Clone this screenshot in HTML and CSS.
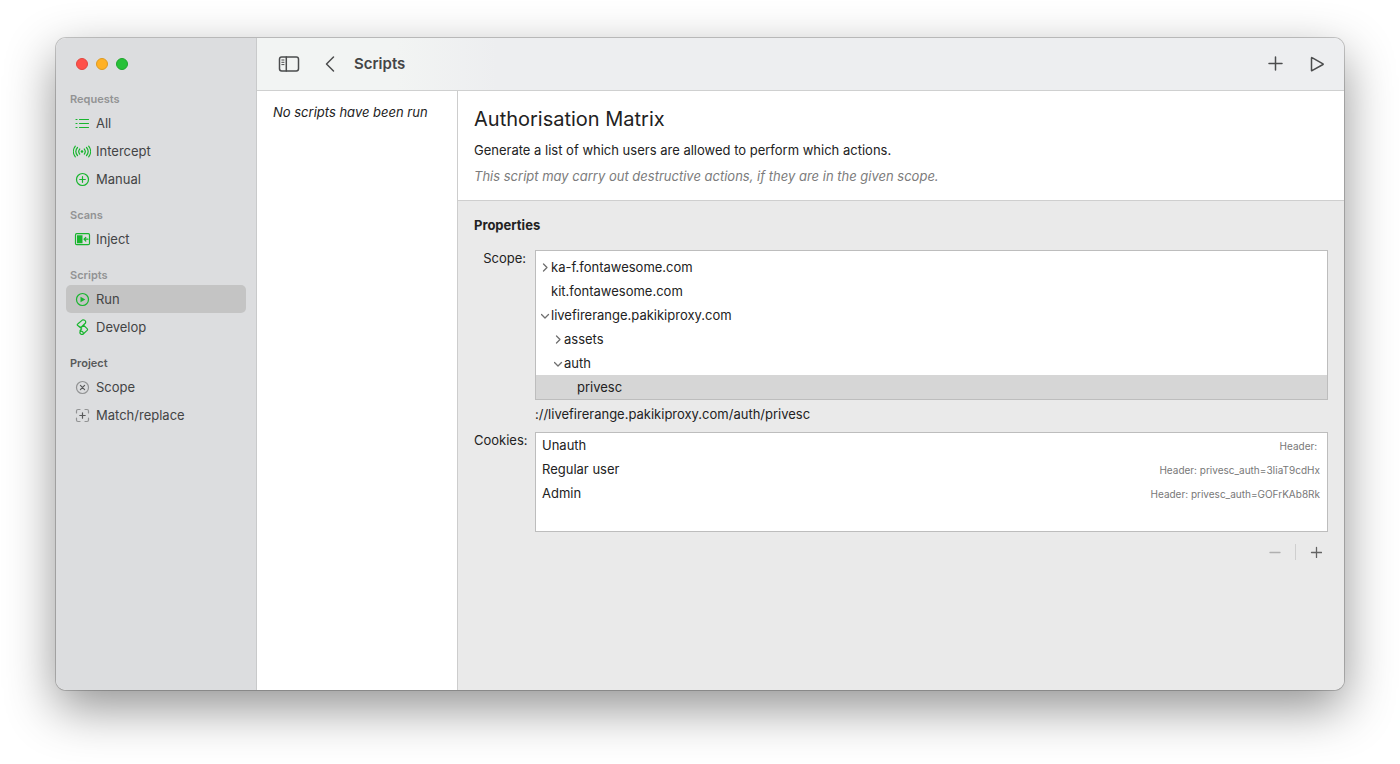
FILE: index.html
```html
<!DOCTYPE html>
<html lang="en">
<head>
<meta charset="utf-8">
<title>Scripts</title>
<meta name="viewport" content="width=device-width, initial-scale=1">
<link rel="stylesheet" href="styles.css">
</head>
<body>
<div class="window">
  <aside class="sidebar">
    <div class="lights">
      <button class="light light-close" aria-label="Close"></button>
      <button class="light light-minimise" aria-label="Minimise"></button>
      <button class="light light-zoom" aria-label="Zoom"></button>
    </div>
    <nav class="nav">
      <section class="group">
        <h2 class="group-title">Requests</h2>
        <a class="item" href="#all">
          <svg class="icon" viewBox="0 0 18 16"><path d="M6.500 4.500h9M6.500 8.500h9M6.500 12.500h9M3 4.500h1M3 8.500h1M3 12.500h1"/></svg>All</a>
        <a class="item" href="#intercept">
          <svg class="icon" viewBox="0 0 18 16"><circle class="solid" cx="9" cy="8.500" r="1.300"/><path d="M6.700 6a4 4 0 0 0 0 5M11.300 6a4 4 0 0 1 0 5M4.500 4.500a6.200 6.200 0 0 0 0 8M13.500 4.500a6.200 6.200 0 0 1 0 8M2.300 3.200a8.500 8.500 0 0 0 0 10.600M15.700 3.200a8.500 8.500 0 0 1 0 10.600"/></svg>Intercept</a>
        <a class="item" href="#manual">
          <svg class="icon" viewBox="0 0 18 16"><circle cx="9.500" cy="8.500" r="6"/><path d="M9.500 5.700v5.600M6.700 8.500h5.600"/></svg>Manual</a>
      </section>
      <section class="group">
        <h2 class="group-title">Scans</h2>
        <a class="item" href="#inject">
          <svg class="icon" viewBox="0 0 18 16"><rect x="2.500" y="2.700" width="14" height="11" rx="1.200"/><path class="solid" d="M4 4.200h5.500v8H4z"/><path d="M15 8.200h-4M12.800 6.400L11 8.200l1.800 1.800"/></svg>Inject</a>
      </section>
      <section class="group">
        <h2 class="group-title">Scripts</h2>
        <a class="item item-current" href="#run" aria-current="page">
          <svg class="icon" viewBox="0 0 18 16"><circle cx="9.500" cy="8.500" r="6"/><path class="solid" d="M7.500 5.700v5.600l4.800-2.800z"/></svg>Run</a>
        <a class="item" href="#develop">
          <svg class="icon" viewBox="0 0 18 16"><path d="M5 4.700L9.300 1.100c1.600-1 4.100.8 3.200 2.900L7.900 8.500 4.800 6.600Q3.600 5.700 5 4.700zM4.800 6.600l3.900 3.300-1.600 1.600M12.500 4l-2 2.200 3.600 3.400q.9.900 0 1.800L10 15.200c-1.500.9-3.600-.6-2.900-2.300M10.700 6.400L7.900 8.900M6.900 12.900q1.200-1.500 2.700-.2 1 1.200.4 2.500"/></svg>Develop</a>
      </section>
      <section class="group group-project">
        <h2 class="group-title">Project</h2>
        <a class="item" href="#scope">
          <svg class="icon" viewBox="0 0 18 16"><circle class="faint" cx="9.500" cy="8.500" r="6"/><path d="M7.400 6.400l4.200 4.200M11.600 6.400l-4.200 4.200"/></svg>Scope</a>
        <a class="item" href="#match">
          <svg class="icon" viewBox="0 0 18 16"><path class="faint" d="M3.500 6V4q0-1.500 1.500-1.500h2M12 2.500h2q1.500 0 1.500 1.500v2M15.500 11v2q0 1.500-1.500 1.500h-2M7 14.500H5q-1.500 0-1.500-1.500v-2"/><path d="M9.500 5.800v5.400M6.800 8.500h5.400"/></svg>Match/replace</a>
      </section>
    </nav>
  </aside>

  <div class="main">
    <header class="toolbar">
      <button class="tool" aria-label="Toggle sidebar">
        <svg width="22" height="18" viewBox="0 0 22 18"><rect x="1.500" y="2" width="19" height="14" rx="2.200"/><path d="M8.300 2v14"/><path class="thin" d="M3.800 5h2.200M3.800 7.300h2.200M3.800 9.600h2.200"/></svg>
      </button>
      <button class="tool tool-back" aria-label="Back">
        <svg width="12" height="18" viewBox="0 0 12 18"><path d="M9.500 2L2.500 9l7 7"/></svg>
      </button>
      <h1 class="title">Scripts</h1>
      <div class="actions">
        <button class="tool" aria-label="Add script">
          <svg width="16" height="18" viewBox="0 0 16 18"><path d="M7.500 2v13M1 8.500h13"/></svg>
        </button>
        <button class="tool" aria-label="Run script">
          <svg width="16" height="18" viewBox="0 0 16 18"><path d="M2.500 3v12.400q0 .6.500.3L14 9.500q.4-.3 0-.6L3 2.700q-.5-.3-.5.3z"/></svg>
        </button>
      </div>
    </header>

    <div class="panes">
      <section class="history"><p class="empty">No scripts have been run</p></section>
      <main class="detail">
        <header class="summary">
          <h2 class="heading">Authorisation Matrix</h2>
          <p class="lead">Generate a list of which users are allowed to perform which actions.</p>
          <p class="warning">This script may carry out destructive actions, if they are in the given scope.</p>
        </header>
        <section class="properties">
          <h3 class="subheading">Properties</h3>
          <div class="form">
            <div class="label" id="scope-label">Scope:</div>
            <div class="field">
              <ul class="box tree" role="tree" aria-labelledby="scope-label">
                <li class="node" role="treeitem" aria-expanded="false"><svg class="arrow" viewBox="0 0 10 10"><path d="M2.500 2L6 5.500 2.500 9"/></svg>ka-f.fontawesome.com</li>
                <li class="node" role="treeitem"><span class="arrow"></span>kit.fontawesome.com</li>
                <li class="node" role="treeitem" aria-expanded="true"><svg class="arrow" viewBox="0 0 10 10"><path d="M.5 4.500L4 8l3.500-3.500"/></svg>livefirerange.pakikiproxy.com</li>
                <li class="node level-2" role="treeitem" aria-expanded="false"><svg class="arrow" viewBox="0 0 10 10"><path d="M2.500 2L6 5.500 2.500 9"/></svg>assets</li>
                <li class="node level-2" role="treeitem" aria-expanded="true"><svg class="arrow" viewBox="0 0 10 10"><path d="M.5 4.500L4 8l3.500-3.500"/></svg>auth</li>
                <li class="node level-3 node-selected" role="treeitem" aria-selected="true"><span class="arrow"></span>privesc</li>
              </ul>
              <p class="url">://livefirerange.pakikiproxy.com/auth/privesc</p>
            </div>
            <div class="label" id="cookies-label">Cookies:</div>
            <div class="field">
              <div class="box cookies">
                <table class="table" aria-labelledby="cookies-label">
                  <tbody>
                    <tr><td>Unauth</td><td class="value">Header:&nbsp;</td></tr>
                    <tr><td>Regular user</td><td class="value">Header: privesc_auth=3IiaT9cdHx</td></tr>
                    <tr><td>Admin</td><td class="value">Header: privesc_auth=GOFrKAb8Rk</td></tr>
                  </tbody>
                </table>
              </div>
              <div class="edit">
                <button class="small" aria-label="Remove cookie" disabled><svg width="12" height="12" viewBox="0 0 12 12"><path d="M1 6.500h10"/></svg></button>
                <span class="divider"></span>
                <button class="small" aria-label="Add cookie"><svg width="12" height="12" viewBox="0 0 12 12"><path d="M1.500 6.500h10M6.500 1.500v10"/></svg></button>
              </div>
            </div>
          </div>
        </section>
      </main>
    </div>
  </div>
</div>
</body>
</html>
```

FILE: styles.css
```css
* { box-sizing: border-box; }

body {
  margin: 0;
  min-height: 100vh;
  display: flex;
  padding: 38px 56px 74px;
  background: #fff;
  color: #222;
  font: 13px/16px Inter, "Liberation Sans", sans-serif;
}

h1, h2, h3, p, ul { margin: 0; padding: 0; }

button {
  padding: 0;
  border: 0;
  background: none;
  font: inherit;
}

svg {
  display: block;
  fill: none;
  stroke: currentColor;
  stroke-linecap: round;
  stroke-linejoin: round;
}

.window {
  flex: 1;
  display: flex;
  min-width: 0;
  border-radius: 10px;
  overflow: hidden;
  background: #fff;
  box-shadow: 0 0 0 1px rgba(0, 0, 0, .2), 0 18px 50px rgba(0, 0, 0, .43);
}

/* Sidebar */
.sidebar {
  flex: 0 0 201px;
  padding: 20px 10px;
  background: #dcdddf;
  border-right: 1px solid #c9cacb;
}

.lights { display: flex; gap: 8px; padding-left: 10px; }

.light {
  width: 12px;
  height: 12px;
  border-radius: 50%;
  border: 1px solid;
}

.light-close { background: #ff5149; border-color: #e2463f; }
.light-minimise { background: #ffb125; border-color: #de9a20; }
.light-zoom { background: #27c138; border-color: #1ea52d; }

.nav {
  display: flex;
  flex-direction: column;
  gap: 12px;
  margin-top: 19px;
}

.group-title {
  padding: 1px 0 0 4px;
  font-size: 11px;
  font-weight: 600;
  line-height: 19px;
  color: #929394;
}

.item {
  display: flex;
  align-items: center;
  gap: 5px;
  height: 28px;
  padding: 0 7px;
  border-radius: 5px;
  color: #434445;
  text-decoration: none;
}

.item-current { background: #c4c4c4; }

.icon { width: 18px; height: 16px; color: #18b52e; stroke-width: 1.2; }
.icon .solid { fill: currentColor; stroke: none; }
.icon .faint { stroke: #929394; }
.group-project .icon { color: #58595a; }
.group-project .group-title { color: #58595a; }

/* Main area */
.main { flex: 1; min-width: 0; display: flex; flex-direction: column; }

.toolbar {
  display: flex;
  align-items: center;
  height: 53px;
  padding: 0 19px 0 21px;
  background: linear-gradient(90deg, #f2f4f3 140px, #edeef0 240px);
  border-bottom: 1px solid #cfd0d0;
}

.tool { color: #4b4c4d; }
.tool svg { stroke-width: 1.5; }
.tool .thin { stroke-width: 1; }
.tool-back { margin: 0 18px 0 24px; }

.title {
  font-size: 15px;
  font-weight: 600;
  line-height: 20px;
  color: #444546;
}

.actions { display: flex; gap: 25px; margin-left: auto; }

.panes { flex: 1; display: flex; }

.history {
  flex: 0 0 201px;
  padding: 13px 16px;
  border-right: 1px solid #cdcdcd;
}

.empty, .warning { font-style: italic; }

.detail { flex: 1; min-width: 0; display: flex; flex-direction: column; }

.summary { padding: 14px 16px 16px; border-bottom: 1px solid #cfcfcf; }

.heading {
  font-size: 20px;
  font-weight: 400;
  line-height: 28px;
}

.lead { margin: 9px 0 10px; }
.warning { color: #7c7c7c; }

.properties { flex: 1; padding: 16px; background: #eaeaea; }

.subheading { font-size: 13px; font-weight: 700; }

.form {
  display: grid;
  grid-template-columns: 52px 1fr;
  column-gap: 9px;
  margin-top: 17px;
}

.label { text-align: right; white-space: nowrap; }

.box { background: #fff; border: 1px solid #bdbdbd; }

.tree { padding-top: 4px; list-style: none; }

.node {
  display: flex;
  align-items: center;
  height: 24px;
  padding-left: 5px;
}

.arrow { width: 10px; height: 10px; color: #6f6f6f; stroke-width: 1.3; }
.level-2 { padding-left: 18px; }
.level-3 { padding-left: 31px; }
.node-selected { background: #d6d6d6; }

.url { margin: 6px 0 10px; }

.cookies { height: 100px; }
.table { width: 100%; border-collapse: collapse; }
.table td { height: 24px; padding: 0 6px; }
.table .value {
  padding: 2px 7px 0 0;
  text-align: right;
  font-size: 10px;
  color: #787878;
}

.edit {
  display: flex;
  align-items: center;
  justify-content: flex-end;
  gap: 14px;
  padding: 12px 6px;
}

.small { color: #636363; }
.small svg { stroke-width: 1.3; }
.small:disabled { color: #b0b0b0; }
.divider { width: 1px; height: 16px; background: #cfcfcf; }
```
